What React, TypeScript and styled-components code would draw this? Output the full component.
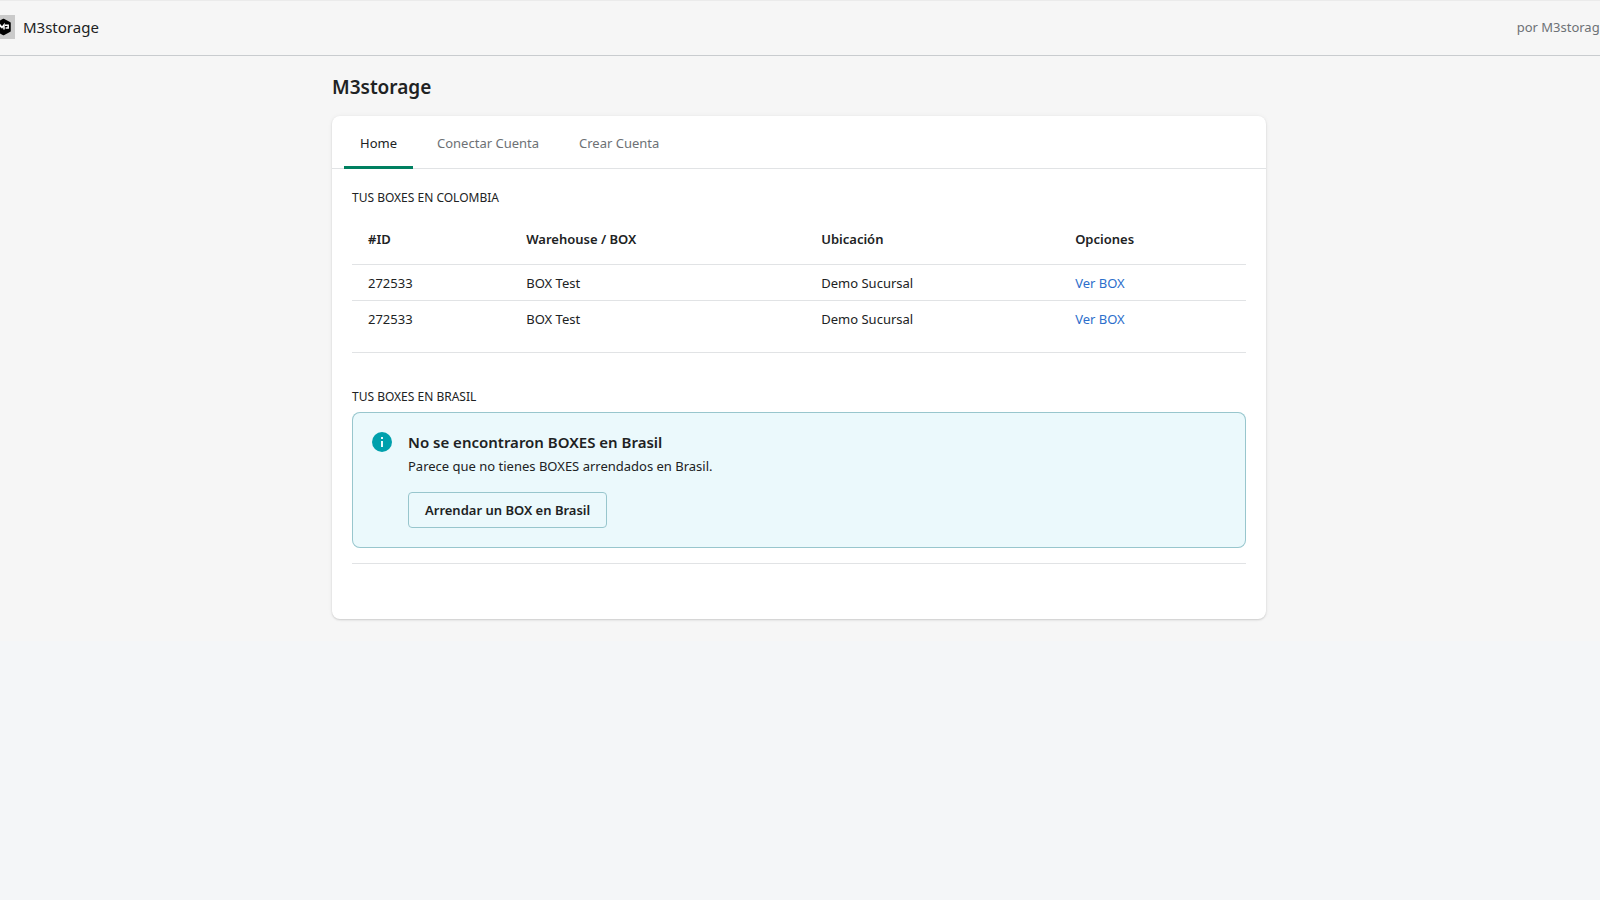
import React, { useState } from "react";
import styled, { createGlobalStyle } from "styled-components";

const GlobalStyle = createGlobalStyle`
  *, *::before, *::after { box-sizing: border-box; }
  body {
    margin: 0;
    background: #f4f6f8;
    color: #202223;
    font-family: "Noto Sans", "Open Sans", sans-serif;
    font-size: 13px;
    line-height: 20px;
    overflow-x: hidden;
  }
`;

const TopBar = styled.header`
  display: flex;
  align-items: center;
  justify-content: space-between;
  height: 56px;
  padding-bottom: 2px;
  border-top: 1px solid #ebebeb;
  border-bottom: 1px solid #c9cccf;
  background: #f6f6f6;
  overflow: hidden;
`;

const Brand = styled.div`
  display: flex;
  align-items: center;
  gap: 8px;
  margin-left: -9px;
  font-size: 15px;
  white-space: nowrap;
`;

const Byline = styled.span`
  margin-right: -7px;
  color: #6d7175;
  white-space: nowrap;
`;

const Frame = styled.div`
  background: #f6f6f6;
`;

const Page = styled.main`
  max-width: 1000px;
  margin: 0 auto;
  padding: 16px 34px 22px 32px;
`;

const Title = styled.h1`
  margin: 0 0 14px;
  font-size: 19px;
  font-weight: 600;
  line-height: 30px;
`;

const Card = styled.section`
  border-radius: 8px;
  background: #fff;
  box-shadow: 0 0 5px rgba(23, 24, 24, 0.05), 0 1px 2px rgba(0, 0, 0, 0.15);
`;

const TabList = styled.div`
  display: flex;
  gap: 8px;
  padding: 0 12px;
  border-bottom: 1px solid #e1e3e5;
`;

const Tab = styled.button<{ $active: boolean }>`
  height: 53px;
  margin-bottom: -1px;
  padding: 0 16px;
  border: 0;
  background: linear-gradient(#008060, #008060) no-repeat bottom / 100% ${(p) => (p.$active ? "3px" : "0")};
  color: ${(p) => (p.$active ? "#202223" : "#6d7175")};
  font: inherit;
  cursor: pointer;
`;

const CardBody = styled.div`
  padding: 21px 20px 55px;
`;

const SectionTitle = styled.h2`
  margin: 0 0 7px;
  font-size: 12px;
  font-weight: 400;
  line-height: 16px;
  text-transform: uppercase;
`;

const Divider = styled.hr<{ $after: number }>`
  height: 1px;
  margin: 15px 0 ${(p) => p.$after}px;
  border: 0;
  background: #e1e3e5;
`;

const Table = styled.table`
  width: 100%;
  border-collapse: collapse;
  table-layout: fixed;
`;

const HeadCell = styled.th<{ $share: number }>`
  width: ${(p) => p.$share}%;
  padding: 16px 16px 15px;
  border-bottom: 1px solid #e1e3e5;
  font-weight: 600;
  text-align: left;
`;

const Row = styled.tr`
  & + & { border-top: 1px solid #e1e3e5; }
`;

const Cell = styled.td`
  height: 36px;
  padding: 0 16px;
`;

const BoxLink = styled.a`
  color: #2c6ecb;
  text-decoration: none;
`;

const Banner = styled.div`
  display: flex;
  gap: 16px;
  padding: 20px;
  border-radius: 8px;
  background: #ebf9fc;
  box-shadow: inset 0 0 0 1px #98c6cd;
`;

const BannerTitle = styled.h3`
  margin: 0 0 4px;
  font-size: 15px;
  font-weight: 600;
  line-height: 20px;
`;

const BannerText = styled.p`
  margin: 0 0 16px;
`;

const OutlineButton = styled.button`
  height: 36px;
  padding: 0 16px;
  border: 1px solid #98c6cd;
  border-radius: 4px;
  background: transparent;
  color: #202223;
  font: inherit;
  font-weight: 600;
  cursor: pointer;
`;

const Logo = () => (
  <svg width="24" height="24" viewBox="0 0 24 24" aria-hidden="true">
    <rect width="24" height="24" fill="#cacaca" />
    <path d="M12.500 4.500 19 8v8l-6.500 3.500L6 16V8z" fill="#000" stroke="#000" strokeWidth="1.500" strokeLinejoin="round" />
    <path d="M8 14.500 9 10l2 2.500 2-2.500v4.500M14 10.200h3.200v2.800h-2.600" fill="none" stroke="#fff" strokeWidth="1.500" />
  </svg>
);

const InfoIcon = () => (
  <svg width="20" height="20" viewBox="0 0 20 20" aria-hidden="true">
    <circle cx="10" cy="10" r="10" fill="#00a0ac" />
    <path d="M9 5h2v2H9zM9 9h2v6H9z" fill="#ebf9fc" />
  </svg>
);

const tabs = ["Home", "Conectar Cuenta", "Crear Cuenta"];

const columns = [
  { label: "#ID", share: 17.7 },
  { label: "Warehouse / BOX", share: 33 },
  { label: "Ubicación", share: 28.4 },
  { label: "Opciones", share: 20.9 },
];

const boxes = [
  { id: "272533", name: "BOX Test", place: "Demo Sucursal" },
  { id: "272533", name: "BOX Test", place: "Demo Sucursal" },
];

export default function App() {
  const [active, setActive] = useState(0);
  return (
    <>
      <GlobalStyle />
      <TopBar>
        <Brand>
          <Logo />
          M3storage
        </Brand>
        <Byline>por M3storage</Byline>
      </TopBar>
      <Frame>
        <Page>
          <Title>M3storage</Title>
          <Card>
            <TabList role="tablist">
              {tabs.map((label, i) => (
                <Tab key={label} role="tab" aria-selected={i === active} $active={i === active} onClick={() => setActive(i)}>
                  {label}
                </Tab>
              ))}
            </TabList>
            <CardBody>
              <SectionTitle>Tus boxes en Colombia</SectionTitle>
              <Table>
                <thead>
                  <tr>
                    {columns.map((c) => (
                      <HeadCell key={c.label} scope="col" $share={c.share}>{c.label}</HeadCell>
                    ))}
                  </tr>
                </thead>
                <tbody>
                  {boxes.map((box, i) => (
                    <Row key={i}>
                      <Cell>{box.id}</Cell>
                      <Cell>{box.name}</Cell>
                      <Cell>{box.place}</Cell>
                      <Cell><BoxLink href="#box">Ver BOX</BoxLink></Cell>
                    </Row>
                  ))}
                </tbody>
              </Table>
              <Divider $after={36} />
              <SectionTitle>Tus boxes en Brasil</SectionTitle>
              <Banner role="status">
                <InfoIcon />
                <div>
                  <BannerTitle>No se encontraron BOXES en Brasil</BannerTitle>
                  <BannerText>Parece que no tienes BOXES arrendados en Brasil.</BannerText>
                  <OutlineButton>Arrendar un BOX en Brasil</OutlineButton>
                </div>
              </Banner>
              <Divider $after={0} />
            </CardBody>
          </Card>
        </Page>
      </Frame>
    </>
  );
}
